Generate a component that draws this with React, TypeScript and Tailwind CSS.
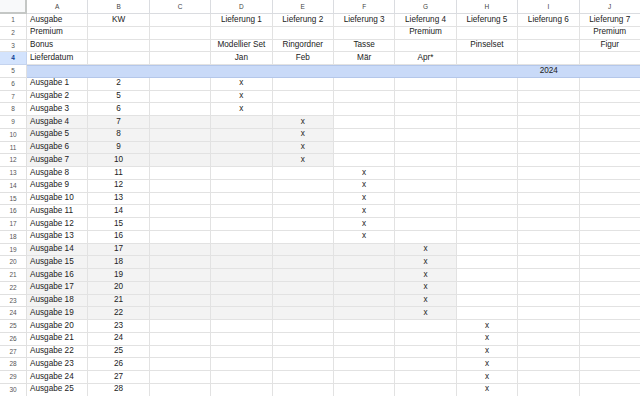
import React from "react";

const COLS = ["A", "B", "C", "D", "E", "F", "G", "H", "I", "J"];

// KW numbers for Ausgabe 1..25
const KW = [2, 5, 6, 7, 8, 9, 10, 11, 12, 13, 14, 15, 16, 17, 18, 19, 20, 21, 22, 23, 24, 25, 26, 27, 28];

type Row = { cells: string[]; gray: number; blue?: boolean };

// head rows 1-4
const head: string[][] = [
  ["Ausgabe", "KW", "", "Lieferung 1", "Lieferung 2", "Lieferung 3", "Lieferung 4", "Lieferung 5", "Lieferung 6", "Lieferung 7"],
  ["Premium", "", "", "", "", "", "Premium", "", "", "Premium"],
  ["Bonus", "", "", "Modellier Set", "Ringordner", "Tasse", "", "Pinselset", "", "Figur"],
  ["Lieferdatum", "", "", "Jan", "Feb", "Mär", "Apr*", "", "", ""],
];

function xCol(row: number): number {
  if (row <= 8) return 3;
  if (row <= 12) return 4;
  if (row <= 18) return 5;
  if (row <= 24) return 6;
  return 7;
}

function grayCols(row: number): number {
  if (row >= 9 && row <= 12) return 5;
  if (row >= 19 && row <= 24) return 7;
  return 0;
}

const rows: Row[] = [
  ...head.map((cells) => ({ cells, gray: 0 })),
  { cells: ["", "", "", "", "", "", "", "", "2024", ""], gray: 0, blue: true },
  ...KW.map((kw, i) => {
    const r = i + 6;
    const cells = ["Ausgabe " + (i + 1), String(kw), "", "", "", "", "", "", "", ""];
    cells[xCol(r)] = "x";
    return { cells, gray: grayCols(r) };
  }),
];

export default function App() {
  return (
    <div
      className="w-[640px] h-[396px] overflow-hidden bg-white text-[#222]"
      style={{ fontFamily: '"Liberation Sans", Arial, sans-serif' }}
    >
      <div className="grid grid-cols-[27px_repeat(10,61.4px)] grid-rows-[14px] auto-rows-[12.75px]">
        {/* column header */}
        <div className="bg-[#f8f9fa] border-r-2 border-b-2 border-[#c4c7c5]" />
        {COLS.map((c) => (
          <div
            key={c}
            className="flex items-center justify-center border-r border-b border-[#dadce0] text-[6.5px] text-[#444]"
          >
            {c}
          </div>
        ))}

        {rows.map((row, ri) => {
          const n = ri + 1;
          return (
            <React.Fragment key={n}>
              <div
                className={
                  n === 4
                    ? "flex items-center justify-center border-r border-b border-[#c4d3ee] bg-[#d3e3fd] text-[6.5px] font-bold text-[#0b3d91]"
                    : "flex items-center justify-center border-r border-b border-[#e0e0e0] text-[6.5px] text-[#555]"
                }
              >
                {n}
              </div>
              {row.cells.map((v, ci) => {
                const left = ci === 0;
                let cls = "flex items-end pb-[2px] whitespace-nowrap overflow-visible text-[8.2px] leading-none ";
                cls += left ? "justify-start pl-[3px] " : "justify-center ";
                if (row.blue) {
                  cls += "bg-[#c9daf8] border-b border-[#b4c7ea] border-t border-t-[#b4c7ea] ";
                } else if (ci < row.gray) {
                  cls += "bg-[#f3f3f3] border-r border-b border-[#e2e2e2] ";
                } else {
                  cls += "bg-white border-r border-b border-[#e2e2e2] ";
                }
                return (
                  <div key={ci} className={cls}>
                    {v}
                  </div>
                );
              })}
            </React.Fragment>
          );
        })}
      </div>
    </div>
  );
}
